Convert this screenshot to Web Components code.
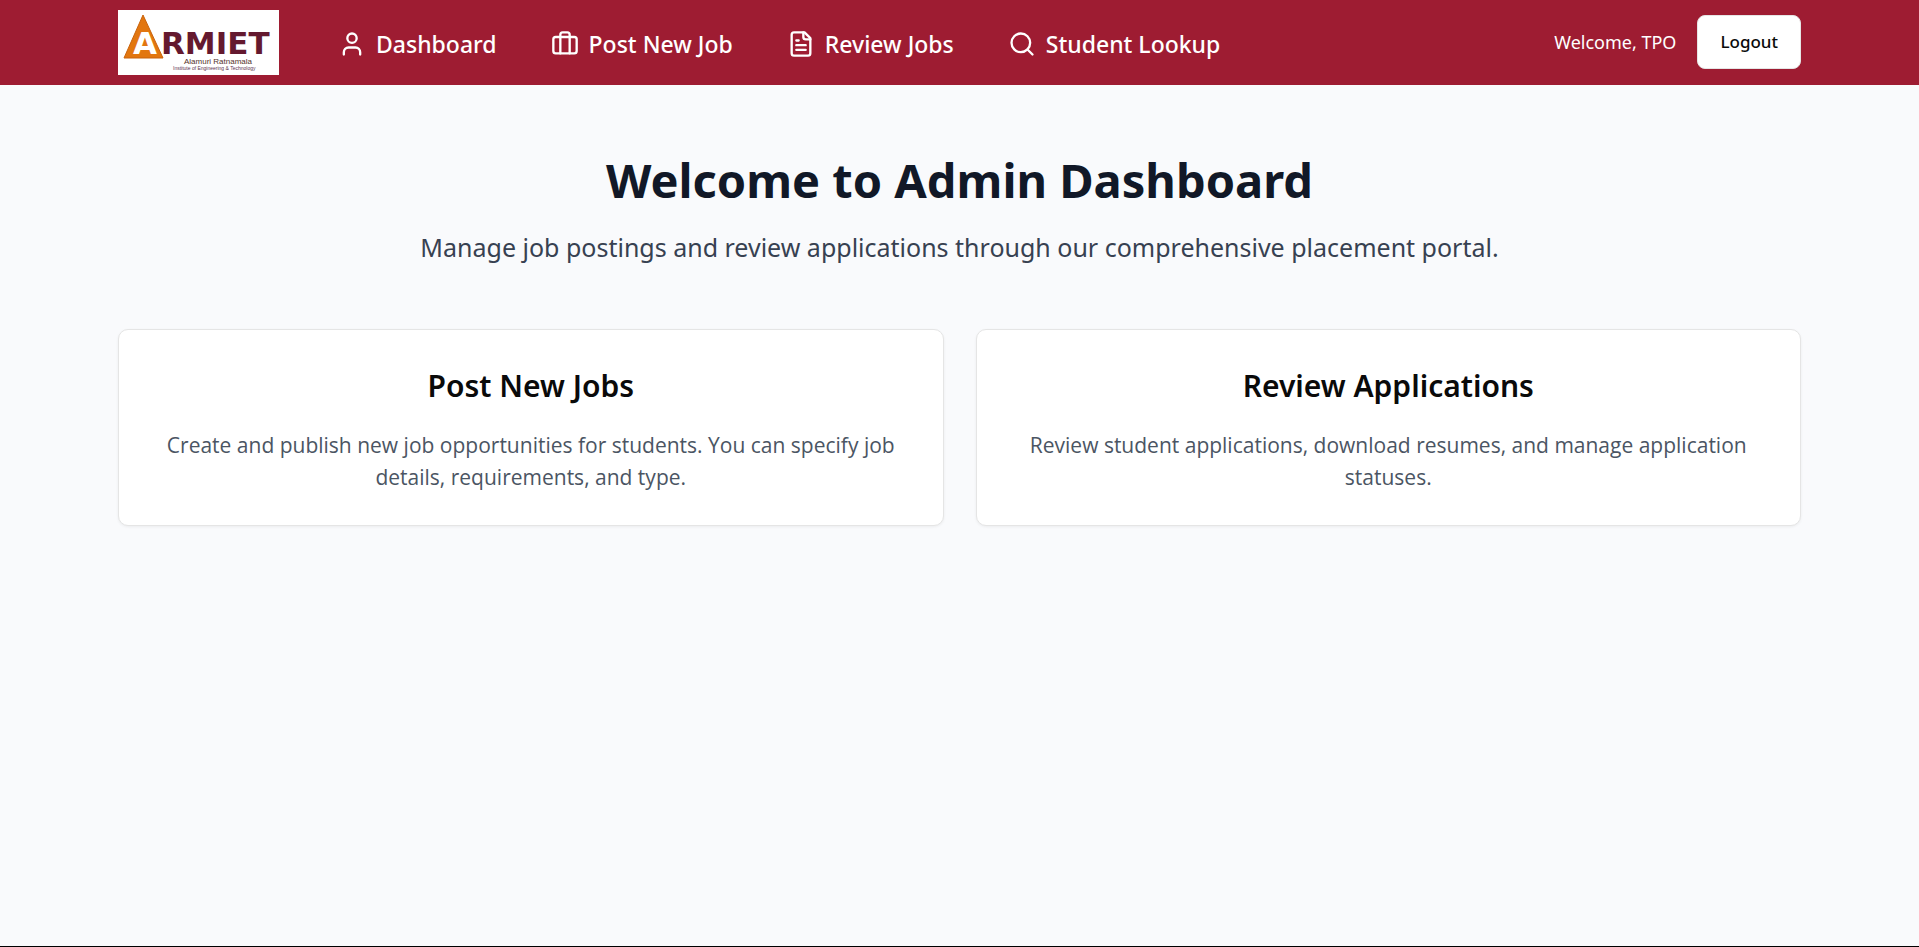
<!DOCTYPE html>
<html lang="en">
<head>
<meta charset="utf-8">
<meta name="viewport" content="width=device-width, initial-scale=1">
<title>Admin Dashboard</title>
<style>
  body { margin: 0; font-family: "Noto Sans", "Open Sans", sans-serif; color: #0a0a0a; }
</style>
</head>
<body>
<admin-page>
  <site-header slot="header">
    <brand-logo slot="brand"></brand-logo>
    <nav-item href="#dashboard" icon="user">Dashboard</nav-item>
    <nav-item href="#post-job" icon="briefcase">Post New Job</nav-item>
    <nav-item href="#review-jobs" icon="file">Review Jobs</nav-item>
    <nav-item href="#student-lookup" icon="search">Student Lookup</nav-item>
    <span slot="user">Welcome, TPO</span>
    <action-button slot="action">Logout</action-button>
  </site-header>
  <page-intro>
    <span slot="title">Welcome to Admin Dashboard</span>
    Manage job postings and review applications through our comprehensive placement portal.
  </page-intro>
  <card-grid>
    <info-card>
      <span slot="title">Post New Jobs</span>
      Create and publish new job opportunities for students. You can specify job details, requirements, and type.
    </info-card>
    <info-card>
      <span slot="title">Review Applications</span>
      Review student applications, download resumes, and manage application statuses.
    </info-card>
  </card-grid>
</admin-page>

<script>
const define = (name, html, setup) => {
  const template = document.createElement('template');
  template.innerHTML = html;
  customElements.define(name, class extends HTMLElement {
    constructor() {
      super();
      this.attachShadow({ mode: 'open' }).append(template.content.cloneNode(true));
    }
    connectedCallback() {
      if (setup) setup(this, this.shadowRoot);
    }
  });
};

const icons = {
  user: '<path d="M19 21v-2a4 4 0 0 0-4-4H9a4 4 0 0 0-4 4v2"/><circle cx="12" cy="7" r="4"/>',
  briefcase: '<rect x="2" y="6" width="20" height="14" rx="2"/><path d="M16 20V4a2 2 0 0 0-2-2h-4a2 2 0 0 0-2 2v16"/>',
  file: '<path d="M15 2H6a2 2 0 0 0-2 2v16a2 2 0 0 0 2 2h12a2 2 0 0 0 2-2V7Z"/><path d="M14 2v4a2 2 0 0 0 2 2h4"/><path d="M10 9H8M16 13H8M16 17H8"/>',
  search: '<circle cx="11" cy="11" r="8"/><path d="m21 21-4.3-4.3"/>'
};

define('admin-page', `
  <style>
    :host { display: flex; flex-direction: column; box-sizing: border-box; min-height: 100vh;
      background: #f9fafc; border-bottom: 1px solid #000; --gutter: clamp(16px, 6.15vw, 118px); }
    main { padding: 67px var(--gutter); }
  </style>
  <slot name="header"></slot>
  <main><slot></slot></main>`);

define('site-header', `
  <style>
    :host { display: block; background: #9e1c32; color: #fff; }
    header { display: flex; align-items: center; flex-wrap: wrap; padding: 10px var(--gutter); }
    nav { display: flex; flex-wrap: wrap; gap: 8px 54px; margin-left: 59px; padding-top: 2px; }
    .account { display: flex; align-items: center; gap: 21px; margin-left: auto; padding-bottom: 2px; font-size: 18px; line-height: 28px; }
  </style>
  <header>
    <slot name="brand"></slot>
    <nav aria-label="Main"><slot></slot></nav>
    <div class="account"><slot name="user"></slot><slot name="action"></slot></div>
  </header>`);

define('brand-logo', `
  <style>
    :host { display: block; }
    a { display: block; }
    svg { display: block; width: 161px; height: 65px; background: #fff; }
    .mark { font: 700 31px "DejaVu Sans", sans-serif; fill: #fff; }
    .name { font: 700 31px "DejaVu Sans", sans-serif; fill: #64192f; }
    .line { font: 8px "Liberation Sans", sans-serif; fill: #54332c; }
    .sub { font: 5px "Liberation Sans", sans-serif; fill: #5d3350; }
  </style>
  <a href="#home" aria-label="ARMIET home">
    <svg viewBox="0 0 161 65">
      <path d="M25 5 45 48H6Z" fill="#e2760f" stroke="#c9630c"/>
      <text class="mark" x="15" y="44">A</text>
      <text class="name" x="43" y="44">RMIET</text>
      <text class="line" x="66" y="54">Alamuri Ratnamala</text>
      <text class="sub" x="55" y="60">Institute of Engineering &amp; Technology</text>
    </svg>
  </a>`);

define('nav-item', `
  <style>
    :host { display: block; }
    a { display: flex; align-items: center; gap: 10px; color: inherit; text-decoration: none;
      font-size: 23px; font-weight: 500; line-height: 32px; white-space: nowrap; }
    svg { width: 28px; height: 28px; fill: none; stroke: currentColor; stroke-width: 2;
      stroke-linecap: round; stroke-linejoin: round; }
  </style>
  <a><svg viewBox="0 0 24 24" aria-hidden="true"></svg><slot></slot></a>`,
  (host, root) => {
    root.querySelector('a').href = host.getAttribute('href');
    root.querySelector('svg').innerHTML = icons[host.getAttribute('icon')];
  });

define('action-button', `
  <style>
    :host { display: block; }
    button { padding: 12px 22px; border: 1px solid #e5e5e5; border-radius: 8px; background: #fff;
      color: #0a0a0a; font: inherit; font-size: 17px; font-weight: 500; line-height: 28px; cursor: pointer; }
  </style>
  <button type="button"><slot></slot></button>`);

define('page-intro', `
  <style>
    :host { display: block; text-align: center; }
    h1 { margin: 0 0 21px; font-size: 47px; font-weight: 700; line-height: 56px; color: #111827; }
    p { margin: 0 0 64px; font-size: 25px; line-height: 36px; color: #374151; }
  </style>
  <h1><slot name="title"></slot></h1>
  <p><slot></slot></p>`);

define('card-grid', `
  <style>
    :host { display: grid; grid-template-columns: repeat(auto-fit, minmax(min(100%, 480px), 1fr)); gap: 32px; }
  </style>
  <slot></slot>`);

define('info-card', `
  <style>
    :host { display: block; padding: 34px 33px 32px; border: 1px solid #e5e5e5; border-radius: 10px;
      background: #fff; box-shadow: 0 1px 3px rgb(0 0 0 / 6%); text-align: center; }
    h2 { margin: 0 0 21px; font-size: 30px; font-weight: 600; line-height: 44px; color: #0a0a0a; }
    p { margin: 0; font-family: "Open Sans", sans-serif; font-size: 21px; line-height: 32px; color: #4b5563; }
  </style>
  <h2><slot name="title"></slot></h2>
  <p><slot></slot></p>`);
</script>
</body>
</html>
